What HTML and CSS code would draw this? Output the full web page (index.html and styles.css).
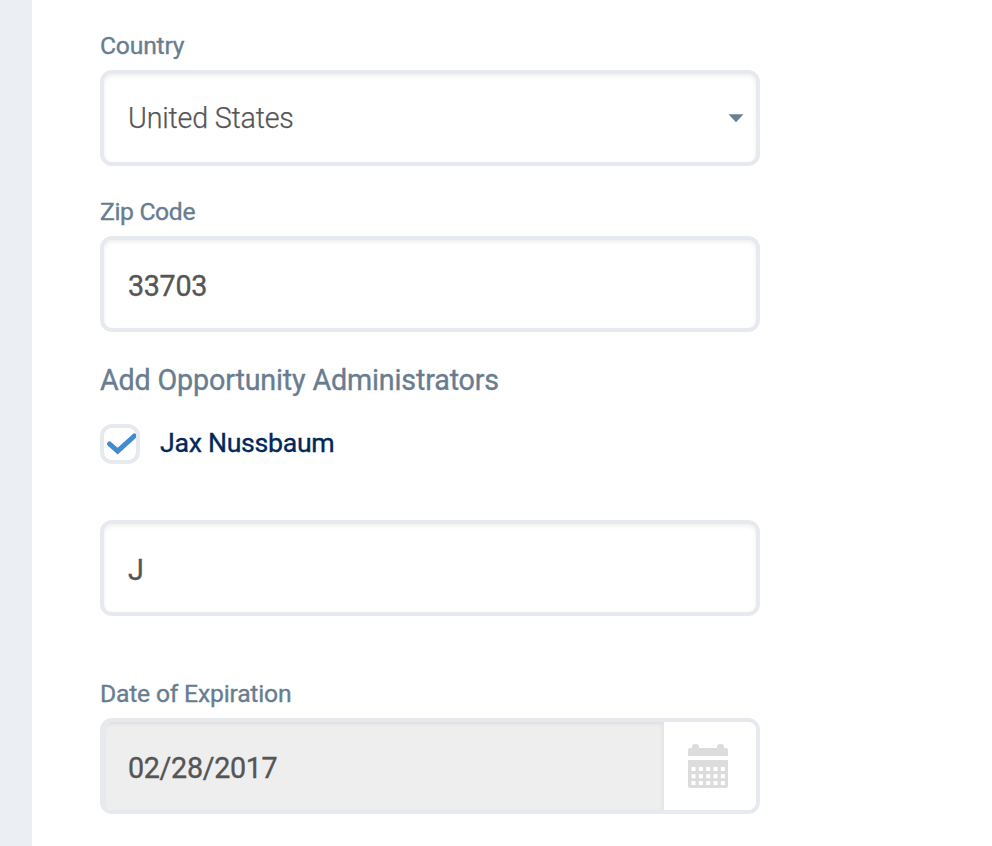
FILE: index.html
```
<!DOCTYPE html>
<html lang="en">
<head>
<meta charset="utf-8">
<title>Opportunity</title>
<link rel="stylesheet" href="styles.css">
</head>
<body>
<main class="panel">
  <form class="form">
    <div class="group">
      <div class="label label-country"><span>Country</span></div>
      <div class="field select"><span>United States</span>
        <svg class="caret" width="16" height="9" viewBox="0 0 16 9"><path d="M.5.3h15L8 8.3z" fill="#6b7f95"/></svg>
      </div>
    </div>
    <div class="group">
      <div class="label label-zip"><span>Zip Code</span></div>
      <div class="field zip"><span>33703</span></div>
    </div>
    <h2 class="heading"><span>Add Opportunity Administrators</span></h2>
    <div class="admin">
      <div class="checkbox">
        <svg width="32" height="32" viewBox="0 0 32 32"><path d="M5.6 16 13.7 23.2 30.3 8" fill="none" stroke="#428bd0" stroke-width="5" stroke-linecap="round"/></svg>
      </div>
      <span class="admin-name">Jax Nussbaum</span>
    </div>
    <div class="field search"><span>J</span></div>
    <div class="group">
      <div class="label label-date"><span>Date of Expiration</span></div>
      <div class="field date">
        <div class="date-value"><span>02/28/2017</span></div>
        <div class="calendar">
          <svg width="42" height="46" viewBox="0 0 42 46">
            <path fill="#dcdcdc" d="M1 13V7q0-2 2-2h2V4q0-3 3-3h1q3 0 3 3v1h18V4q0-3 3-3h1q3 0 3 3v1h2q2 0 2 2v6zM1 17h40v26q0 2-2 2H3q-2 0-2-2z"/>
            <path stroke="#fff" stroke-width="4" stroke-dasharray="4 3.35" d="M4.5 26H38M4.5 33.3H38M4.5 40H38"/>
          </svg>
        </div>
      </div>
    </div>
  </form>
</main>
</body>
</html>
```
FILE: styles.css
```
* { box-sizing: border-box; }
body {
  margin: 0;
  height: 846px;
  overflow: hidden;
  padding-left: 32px;
  background: #ebeff4;
  font-family: Roboto, "Liberation Sans", sans-serif;
  -webkit-text-stroke: .35px currentColor;
}
.panel { height: 846px; padding: 32px 68px 0; background: #fff; }
.form { width: 660px; }
.label {
  height: 38px;
  line-height: 28px;
  font-size: 24.7px;
  letter-spacing: -.2px;
  font-weight: 400;
  color: #687d90;
}
.label-zip { margin-top: 32px; }
.label-zip span { letter-spacing: -.35px; }
.label-date { margin-top: 64px; }
.field {
  display: flex;
  align-items: center;
  height: 96px;
  padding: 4px 0 0 24px;
  border: 4px solid #e6e9ee;
  border-radius: 12px;
  background: #fff;
  box-shadow: inset 0 2px 4px rgba(0, 0, 0, .07);
  color: #555;
  font-size: 28.7px;
  letter-spacing: -.33px;
  font-weight: 400;
}
.select {
  justify-content: space-between;
  padding: 0 12px 0 24px;
  font-weight: 300;
  letter-spacing: -.2px;
  -webkit-text-stroke-width: .25px;
}
.heading {
  height: 36px;
  margin: 30px 0 26px;
  line-height: 36px;
  font-size: 28.7px;
  letter-spacing: -.16px;
  font-weight: 400;
  color: #687d90;
}
.admin { display: flex; height: 40px; margin-bottom: 56px; }
.checkbox {
  width: 40px;
  height: 40px;
  border: 4px solid #e6e9ee;
  border-radius: 12px;
}
.checkbox svg { display: block; }
.admin-name {
  margin-left: 20px;
  line-height: 38px;
  font-size: 26.7px;
  letter-spacing: -.3px;
  font-weight: 400;
  color: #002859;
}
.date { padding: 0; overflow: hidden; align-items: stretch; }
.date-value {
  display: flex;
  align-items: center;
  width: 560px;
  padding: 4px 0 0 24px;
  border-right: 1px solid #e6e6e6;
  background: #eee;
  box-shadow: inset 0 2px 4px rgba(0, 0, 0, .07);
}
.calendar { display: flex; flex: 1; align-items: center; padding-left: 23px; background: #fff; }
```
